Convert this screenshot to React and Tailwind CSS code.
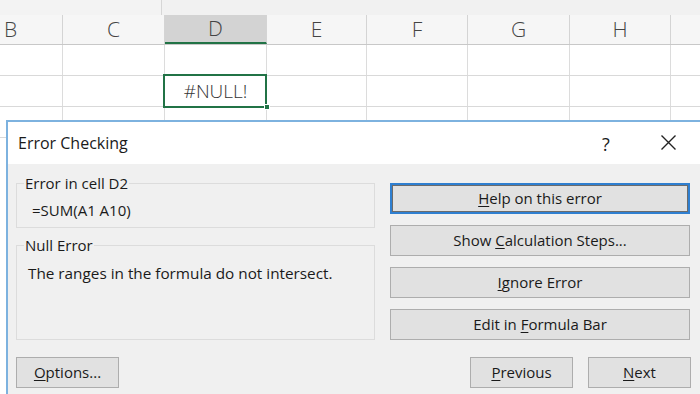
import React from "react";

const font = { fontFamily: '"Open Sans", "Noto Sans", sans-serif' };

function U({ children }) {
  return <span className="underline underline-offset-2 decoration-1">{children}</span>;
}

function Btn({ children, className = "", focused = false }) {
  return (
    <div
      className={
        "flex items-center justify-center h-[31px] text-[15px] text-[#1a1a1a] bg-[#e1e1e1] " +
        (focused
          ? "border-2 border-[#2f7fd0] shadow-[inset_0_0_0_1px_#6b6b6b] "
          : "border border-[#adadad] ") +
        className
      }
    >
      <span className="whitespace-pre">{children}</span>
    </div>
  );
}

export default function App() {
  const cols = [
    { l: "B", w: 63, sel: false },
    { l: "C", w: 102, sel: false },
    { l: "D", w: 102, sel: true },
    { l: "E", w: 100, sel: false },
    { l: "F", w: 101, sel: false },
    { l: "G", w: 102, sel: false },
    { l: "H", w: 101, sel: false },
    { l: "", w: 40, sel: false },
  ];
  return (
    <div className="relative w-[700px] h-[394px] overflow-hidden bg-white" style={font}>
      {/* top strip */}
      <div className="flex h-[15px] bg-[#f3f3f3]">
        <div className="w-[162px] border-r border-[#d6d6d6]" />
        <div className="flex-1 bg-[#f1f1f1]" />
      </div>
      {/* column headers */}
      <div className="flex h-[30px] bg-[#f6f6f6] border-b border-[#c8c8c8]">
        {cols.map((c, i) => (
          <div
            key={i}
            style={{ width: c.w }}
            className={
              "shrink-0 flex items-center justify-center text-[21px] font-light text-[#444] border-r border-[#d4d4d4] " +
              (c.sel ? "bg-[#d3d3d3] border-b-2 border-b-[#217346]" : "") +
              (i === 0 ? " justify-start pl-[4px]" : "")
            }
          >
            {c.l}
          </div>
        ))}
      </div>
      {/* rows */}
      {[0, 1, 2].map((r) => (
        <div key={r} className="flex h-[31px] border-b border-[#d9d9d9]">
          {cols.map((c, i) => (
            <div
              key={i}
              style={{ width: c.w }}
              className={
                "shrink-0 border-r border-[#dcdcdc] flex items-center justify-center " +
                (r === 1 && c.sel ? "relative" : "")
              }
            >
              {r === 1 && c.sel && (
                <>
                  <div className="absolute -left-[2px] -top-[2px] -right-[1px] -bottom-[2px] border-2 border-[#217346]" />
                  <div className="absolute -right-[4px] -bottom-[4px] w-[6px] h-[6px] bg-[#217346] border border-white" />
                  <span className="text-[19px] font-light text-[#333]">#NULL!</span>
                </>
              )}
            </div>
          ))}
        </div>
      ))}

      {/* dialog */}
      <div className="absolute left-[6px] top-[120px] w-[720px] h-[300px] border-2 border-[#7db2df] bg-[#f0f0f0] flex flex-col">
        <div className="relative h-[42px] bg-white flex items-center pl-[10px] shrink-0">
          <span className="text-[16px] text-[#1a1a1a]">Error Checking</span>
          <span className="absolute left-[594px] top-[9px] text-[18px] text-[#1a1a1a]">?</span>
          <div className="absolute left-[652px] top-[12px]">
            <svg width="17" height="17" viewBox="0 0 17 17">
              <path d="M1.5 1.5 L15.5 15.5 M15.5 1.5 L1.5 15.5" stroke="#222" strokeWidth="1.4" fill="none" />
            </svg>
          </div>
        </div>
        <div className="flex flex-col pl-[8px] pt-[10px]">
          <div className="flex gap-[15px]">
            <div className="w-[359px] flex flex-col gap-[8px]">
              <fieldset className="border border-[#dcdcdc] h-[54px] pl-[7px]">
                <legend className="text-[15px] text-[#1a1a1a] px-[1px] leading-[19px]">Error in cell D2</legend>
                <div className="text-[15px] text-[#1a1a1a] pl-[8px] mt-[8px] leading-[19px]">=SUM(A1 A10)</div>
              </fieldset>
              <fieldset className="border border-[#dcdcdc] h-[104px] pl-[7px]">
                <legend className="text-[15px] text-[#1a1a1a] px-[1px] leading-[19px]">Null Error</legend>
                <div className="text-[15.3px] text-[#1a1a1a] pl-[4px] mt-[9px] leading-[19px]">
                  The ranges in the formula do not intersect.
                </div>
              </fieldset>
            </div>
            <div className="w-[300px] flex flex-col gap-[11px] pt-[9px]">
              <Btn focused>
                <U>H</U>elp on this error
              </Btn>
              <Btn>
                Show <U>C</U>alculation Steps...
              </Btn>
              <Btn>
                <U>I</U>gnore Error
              </Btn>
              <Btn>
                Edit in <U>F</U>ormula Bar
              </Btn>
            </div>
          </div>
          <div className="flex mt-[17px]">
            <Btn className="w-[103px]">
              <U>O</U>ptions...
            </Btn>
            <Btn className="w-[103px] ml-[351px]">
              <U>P</U>revious
            </Btn>
            <Btn className="w-[103px] ml-[15px]">
              <U>N</U>ext
            </Btn>
          </div>
        </div>
      </div>
    </div>
  );
}
